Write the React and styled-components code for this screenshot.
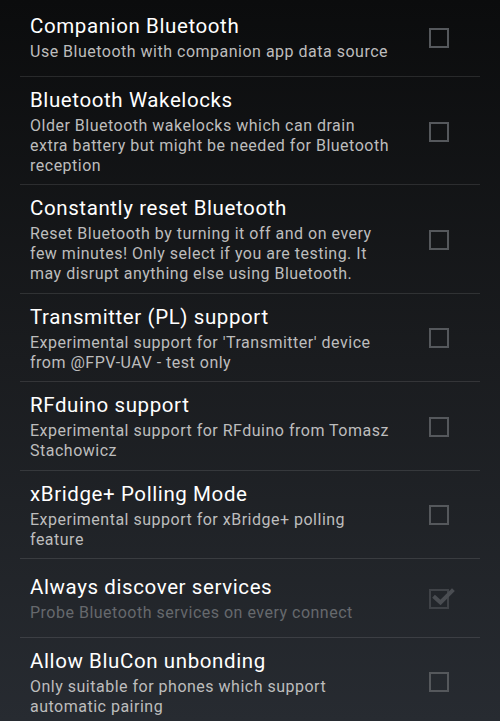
import React from 'react';
import styled, { createGlobalStyle } from 'styled-components';

const GlobalStyle = createGlobalStyle`
  * {
    box-sizing: border-box;
  }

  html, body {
    margin: 0;
    padding: 0;
    height: 100%;
  }

  body {
    font-family: Roboto, 'Noto Sans', sans-serif;
    background: #0b0c0d;
    overflow: hidden;
  }
`;

const Screen = styled.div`
  width: 500px;
  height: 721px;
  overflow: hidden;
  background: linear-gradient(to bottom, #0b0c0d 0%, #1a1c1f 50%, #272b31 100%);
`;

const List = styled.div`
  display: flex;
  flex-direction: column;
  margin-top: -2px;
`;

const Row = styled.div`
  display: flex;
  align-items: center;
  min-height: 79px;
  margin: 0 20px;
  padding: 10px 0 8.4px 10px;
  border-bottom: 1px solid rgba(255, 255, 255, 0.11);
`;

const TextBlock = styled.div`
  flex: 1;
  max-width: 360px;
  display: flex;
  flex-direction: column;
  gap: 3px;
`;

const Title = styled.div`
  color: #ffffff;
  font-size: 20.5px;
  letter-spacing: 0.6px;
  line-height: 26px;
`;

const Summary = styled.div`
  color: ${(p) => (p.disabled ? '#66696d' : '#bdbdbd')};
  font-size: 16px;
  letter-spacing: 0.5px;
  line-height: 20px;
`;

const Box = styled.div`
  position: relative;
  flex: none;
  width: 20px;
  height: 20px;
  margin-left: auto;
  margin-right: 31px;
  border: 2px solid ${(p) => (p.disabled ? '#3f4247' : '#55585c')};
`;

const Tick = styled.svg`
  position: absolute;
  left: 1px;
  top: -3px;
  overflow: visible;
`;

const Checkbox = ({ checked, disabled }) => (
  <Box disabled={disabled}>
    {checked && (
      <Tick width="22" height="20" viewBox="0 0 22 20">
        <path
          d="M3 9.5 L8.5 14.5 L20 3"
          fill="none"
          stroke={disabled ? '#4a4d52' : '#33b5e5'}
          strokeWidth="4"
          strokeLinecap="square"
        />
      </Tick>
    )}
  </Box>
);

const prefs = [
  {
    title: 'Companion Bluetooth',
    summary: 'Use Bluetooth with companion app data source',
  },
  {
    title: 'Bluetooth Wakelocks',
    summary:
      'Older Bluetooth wakelocks which can drain extra battery but might be needed for Bluetooth reception',
  },
  {
    title: 'Constantly reset Bluetooth',
    summary:
      'Reset Bluetooth by turning it off and on every few minutes! Only select if you are testing. It may disrupt anything else using Bluetooth.',
  },
  {
    title: 'Transmitter (PL) support',
    summary: "Experimental support for 'Transmitter' device from @FPV-UAV - test only",
  },
  {
    title: 'RFduino support',
    summary: 'Experimental support for RFduino from Tomasz Stachowicz',
  },
  {
    title: 'xBridge+ Polling Mode',
    summary: 'Experimental support for xBridge+ polling feature',
  },
  {
    title: 'Always discover services',
    summary: 'Probe Bluetooth services on every connect',
    checked: true,
    disabled: true,
  },
  {
    title: 'Allow BluCon unbonding',
    summary: 'Only suitable for phones which support automatic pairing',
  },
];

export default function App() {
  return (
    <>
      <GlobalStyle />
      <Screen>
        <List>
          {prefs.map((p) => (
            <Row key={p.title}>
              <TextBlock>
                <Title>{p.title}</Title>
                <Summary disabled={p.disabled}>{p.summary}</Summary>
              </TextBlock>
              <Checkbox checked={p.checked} disabled={p.disabled} />
            </Row>
          ))}
        </List>
      </Screen>
    </>
  );
}
